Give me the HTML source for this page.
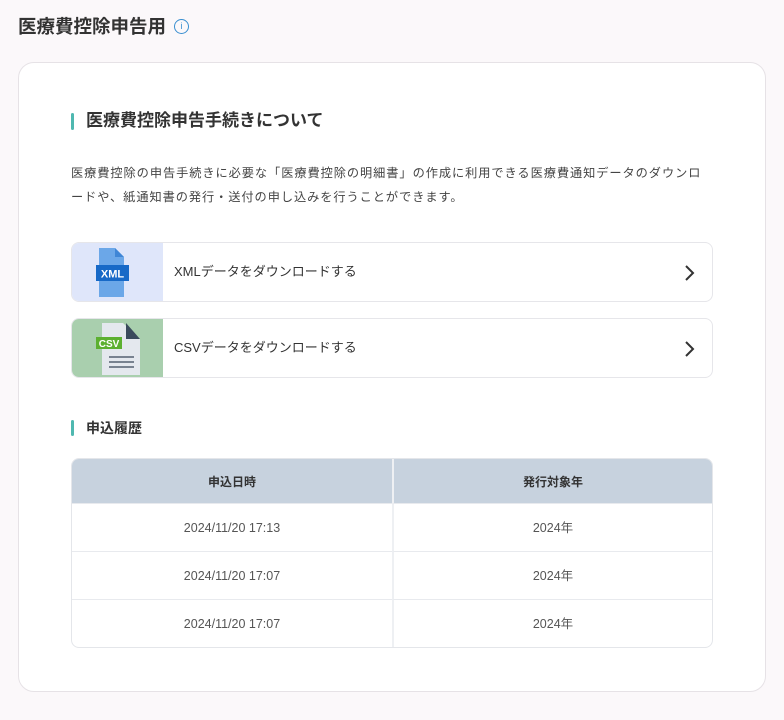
<!DOCTYPE html>
<html><head><meta charset="utf-8"><style>
*{box-sizing:border-box;margin:0;padding:0}
body{width:784px;height:720px;background:#fbf8fa;font-family:"Liberation Sans","Noto Sans CJK JP",sans-serif;color:#333;position:relative;overflow:hidden}
.title{position:absolute;left:18px;top:13px;font-size:18.5px;font-weight:bold;color:#333;display:flex;align-items:center}
.info{display:inline-block;width:15px;height:15px;border:1.3px solid #3a8fd0;border-radius:50%;margin-left:8px;font-size:9px;color:#3a8fd0;text-align:center;line-height:12px;font-weight:normal}
.card{position:absolute;left:18px;top:62px;width:748px;height:630px;background:#fff;border:1px solid #e6e2e6;border-radius:16px}
.h2{position:absolute;left:52px;top:47px;font-size:17px;font-weight:bold;padding-left:15px;line-height:22px}
.h2:before,.h3:before{content:"";position:absolute;left:0;top:3px;width:3px;height:17px;background:#4fb8b0;border-radius:2px}
.p{position:absolute;left:52px;top:98px;width:700px;white-space:nowrap;font-size:12.2px;letter-spacing:0.95px;line-height:24px;color:#444}
.row{position:absolute;left:52px;width:642px;height:60px;border:1px solid #e6e6ea;border-radius:8px;overflow:hidden;background:#fff}
.row .ic{position:absolute;left:0;top:0;width:91px;height:100%}
.row .t{position:absolute;left:102px;top:0;line-height:58px;font-size:13px;color:#333}
.row svg.ch{position:absolute;right:16px;top:21px}
.h3{position:absolute;left:52px;top:355px;font-size:14px;font-weight:bold;padding-left:15px;line-height:20px}
.h3:before{height:16px;top:2px}
table{position:absolute;left:52px;top:395px;width:642px;border-collapse:separate;border-spacing:0;border:1px solid #e4e6ea;border-radius:8px;overflow:hidden;font-size:12.5px;color:#555}
th{background:#c7d2de;height:44px;font-weight:bold;font-size:12px;color:#333}
td{height:48px;text-align:center;vertical-align:middle;border-top:1px solid #e8eaee;line-height:16px}
th+th,td+td{border-left:2px solid #eef0f3}
th,td{width:50%}
</style></head><body>
<div class="title">医療費控除申告用<span class="info">i</span></div>
<div class="card">
<div class="h2">医療費控除申告手続きについて</div>
<div class="p">医療費控除の申告手続きに必要な「医療費控除の明細書」の作成に利用できる医療費通知データのダウンロ<br>ードや、紙通知書の発行・送付の申し込みを行うことができます。</div>
<div class="row" style="top:179px"><div class="ic" style="background:#dfe6fa">
<svg width="91" height="60"><path d="M27 5h16l9 9v40H27z" fill="#6ba7e8"/><path d="M43 5l9 9h-9z" fill="#3f86d6"/><rect x="24" y="22" width="33" height="16" fill="#1769c7"/><text x="40.5" y="34.5" font-size="11" font-weight="bold" fill="#fff" text-anchor="middle" font-family="Liberation Sans">XML</text></svg></div>
<div class="t">XMLデータをダウンロードする</div>
<svg class="ch" width="12" height="18"><path d="M2 2l7 7-7 7" stroke="#333" stroke-width="2" fill="none"/></svg></div>
<div class="row" style="top:255px"><div class="ic" style="background:#a9cfae">
<svg width="91" height="60"><path d="M30 4h21l17 16v36H30z" fill="#e4e8ee"/><path d="M54 4l14 16h-14z" fill="#3a4a5c"/><rect x="24" y="18" width="26" height="12" fill="#5cb030"/><text x="37" y="28" font-size="10" font-weight="bold" fill="#fff" text-anchor="middle" font-family="Liberation Sans">CSV</text><path d="M37 38h25M37 43h25M37 48h25" stroke="#556070" stroke-width="1.5"/></svg></div>
<div class="t">CSVデータをダウンロードする</div>
<svg class="ch" width="12" height="18"><path d="M2 2l7 7-7 7" stroke="#333" stroke-width="2" fill="none"/></svg></div>
<div class="h3">申込履歴</div>
<table>
<tr><th>申込日時</th><th>発行対象年</th></tr>
<tr><td>2024/11/20 17:13</td><td>2024年</td></tr>
<tr><td>2024/11/20 17:07</td><td>2024年</td></tr>
<tr><td>2024/11/20 17:07</td><td>2024年</td></tr>
</table>
</div>
</body></html>
